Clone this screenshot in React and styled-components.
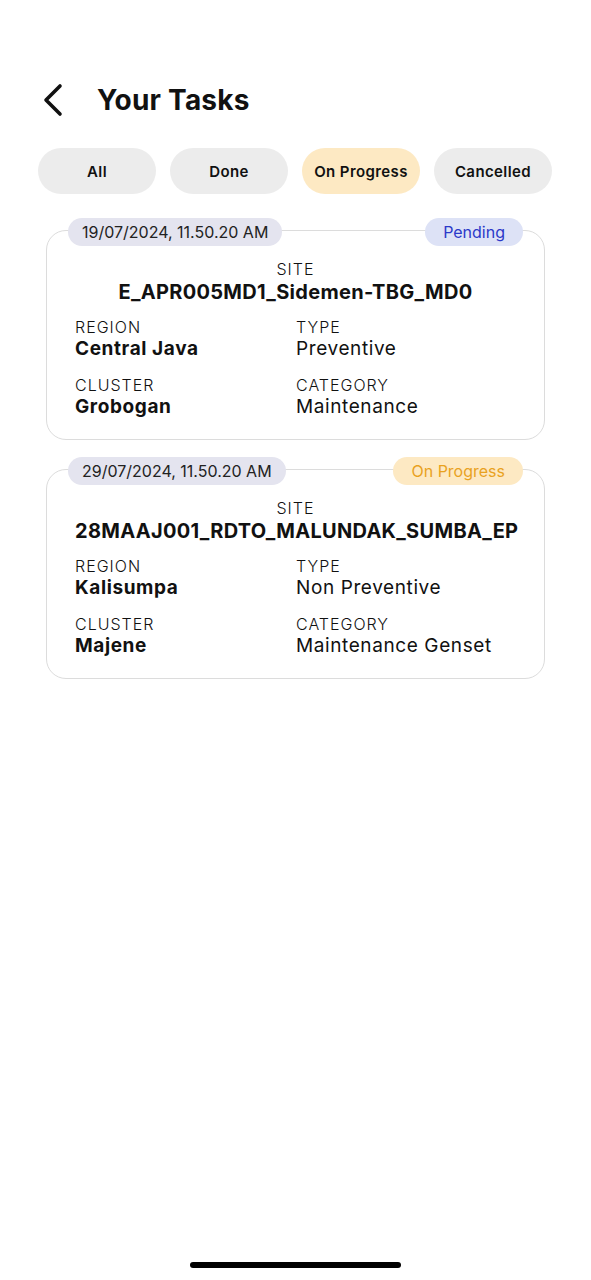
import React, { useState } from 'react';
import styled, { createGlobalStyle } from 'styled-components';

const GlobalStyle = createGlobalStyle`
  body {
    margin: 0;
    background: #ffffff;
    font-family: Inter, "Noto Sans", sans-serif;
    color: #111111;
  }
`;

const Page = styled.div`
  position: relative;
  width: 591px;
  min-height: 1280px;
  box-sizing: border-box;
  padding: 82px 38px 0 38px;
`;

const Header = styled.div`
  display: flex;
  align-items: center;
  gap: 33px;
  padding-left: 4px;
  height: 36px;
`;

const BackButton = styled.button`
  border: none;
  background: transparent;
  padding: 0;
  display: flex;
  align-items: center;
  cursor: pointer;
`;

const Title = styled.h1`
  margin: 0;
  font-size: 28px;
  font-weight: 700;
  letter-spacing: 0.2px;
`;

const Tabs = styled.div`
  display: flex;
  gap: 14px;
  margin-top: 30px;
`;

const Tab = styled.button`
  width: 118px;
  height: 46px;
  border: none;
  border-radius: 23px;
  background: ${p => (p.$active ? '#fde9c3' : '#ececec')};
  font-family: inherit;
  font-size: 15px;
  font-weight: 600;
  letter-spacing: 0.4px;
  color: #111;
  cursor: pointer;
`;

const List = styled.div`
  display: flex;
  flex-direction: column;
  gap: 29px;
  margin: 36px 8px 0 8px;
`;

const Card = styled.div`
  position: relative;
  border: 1.5px solid #dcdcdc;
  border-radius: 20px;
  padding: 28px 28px 20px 28px;
`;

const PillRow = styled.div`
  position: absolute;
  top: -13px;
  left: 21px;
  right: 21px;
  display: flex;
  justify-content: space-between;
`;

const Pill = styled.span`
  height: 28px;
  padding: 0 ${p => (p.$wide ? 18 : 14)}px;
  border-radius: 14px;
  display: flex;
  align-items: center;
  font-size: 16px;
  background: ${p => p.$bg};
  color: ${p => p.$color};
`;

const SiteLabel = styled.div`
  text-align: center;
  font-size: 16px;
  font-weight: 300;
  letter-spacing: 1px;
  line-height: 20px;
  text-transform: uppercase;
`;

const SiteName = styled.div`
  text-align: center;
  font-size: 20px;
  font-weight: 700;
  letter-spacing: 0.3px;
  line-height: 26px;
`;

const Grid = styled.div`
  display: grid;
  grid-template-columns: 221px 1fr;
  row-gap: 14px;
  margin-top: 12px;
`;

const Label = styled.div`
  font-size: 16px;
  font-weight: 300;
  letter-spacing: 1px;
  line-height: 20px;
  text-transform: uppercase;
`;

const Value = styled.div`
  font-size: 19px;
  font-weight: ${p => (p.$bold ? 700 : 400)};
  letter-spacing: 0.6px;
  line-height: 24px;
`;

const HomeBar = styled.div`
  position: absolute;
  left: 190px;
  bottom: 12px;
  width: 211px;
  height: 6px;
  border-radius: 3px;
  background: #000;
`;

const statusStyle = {
  Pending: { bg: '#dde2f6', color: '#2b39c9' },
  'On Progress': { bg: '#fde9c3', color: '#e9a21f' },
};

const tasks = [
  {
    date: '19/07/2024, 11.50.20 AM',
    status: 'Pending',
    site: 'E_APR005MD1_Sidemen-TBG_MD0',
    region: 'Central Java',
    type: 'Preventive',
    cluster: 'Grobogan',
    category: 'Maintenance',
  },
  {
    date: '29/07/2024, 11.50.20 AM',
    status: 'On Progress',
    site: '28MAAJ001_RDTO_MALUNDAK_SUMBA_EP',
    region: 'Kalisumpa',
    type: 'Non Preventive',
    cluster: 'Majene',
    category: 'Maintenance Genset',
  },
];

function Field({ label, value, bold }) {
  return (
    <div>
      <Label>{label}</Label>
      <Value $bold={bold}>{value}</Value>
    </div>
  );
}

export default function App() {
  const [tab, setTab] = useState('On Progress');

  return (
    <>
      <GlobalStyle />
      <Page>
        <Header>
          <BackButton>
            <svg width="22" height="34" viewBox="0 0 22 34" fill="none">
              <path d="M18 3 L4 17 L18 31" stroke="#111" strokeWidth="3.6" strokeLinecap="round" strokeLinejoin="round" />
            </svg>
          </BackButton>
          <Title>Your Tasks</Title>
        </Header>

        <Tabs>
          {['All', 'Done', 'On Progress', 'Cancelled'].map(t => (
            <Tab key={t} $active={tab === t} onClick={() => setTab(t)}>
              {t}
            </Tab>
          ))}
        </Tabs>

        <List>
          {tasks.map((task, i) => (
            <Card key={i}>
              <PillRow>
                <Pill $bg="#e4e4ef" $color="#222">{task.date}</Pill>
                <Pill $wide $bg={statusStyle[task.status].bg} $color={statusStyle[task.status].color}>
                  {task.status}
                </Pill>
              </PillRow>
              <SiteLabel>Site</SiteLabel>
              <SiteName>{task.site}</SiteName>
              <Grid>
                <Field label="Region" value={task.region} bold />
                <Field label="Type" value={task.type} />
                <Field label="Cluster" value={task.cluster} bold />
                <Field label="Category" value={task.category} />
              </Grid>
            </Card>
          ))}
        </List>

        <HomeBar />
      </Page>
    </>
  );
}
